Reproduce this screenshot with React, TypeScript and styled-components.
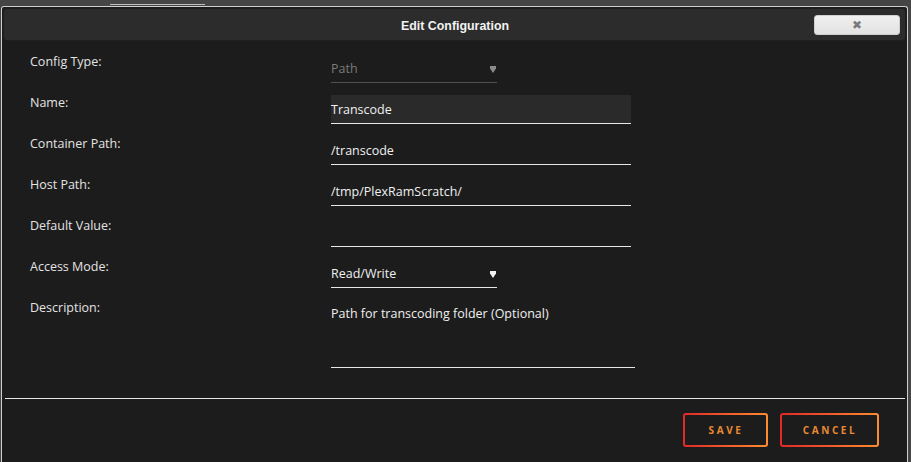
import React from 'react';
import styled, { createGlobalStyle } from 'styled-components';

const GlobalStyle = createGlobalStyle`
  html, body {
    margin: 0;
    padding: 0;
    background: #454545;
    height: 462px;
    overflow: hidden;
  }
  body {
    font-family: 'Open Sans', 'Liberation Sans', sans-serif;
  }
`;

type Field = {
  label: string;
  value: string;
  kind: 'select' | 'input' | 'textarea';
  disabled?: boolean;
  focused?: boolean;
};

const fields: Field[] = [
  { label: 'Config Type:', value: 'Path', kind: 'select', disabled: true },
  { label: 'Name:', value: 'Transcode', kind: 'input', focused: true },
  { label: 'Container Path:', value: '/transcode', kind: 'input' },
  { label: 'Host Path:', value: '/tmp/PlexRamScratch/', kind: 'input' },
  { label: 'Default Value:', value: '', kind: 'input' },
  { label: 'Access Mode:', value: 'Read/Write', kind: 'select' },
  { label: 'Description:', value: 'Path for transcoding folder (Optional)', kind: 'textarea' },
];

const Page = styled.div`
  width: 911px;
  height: 462px;
  display: flex;
  flex-direction: column;
`;

const TopStrip = styled.div`
  height: 6px;
  flex-shrink: 0;
  display: flex;
  align-items: flex-end;
  padding-bottom: 1px;
  box-sizing: border-box;
`;

const TabLine = styled.div`
  margin-left: 110px;
  width: 95px;
  height: 1px;
  background: #bdbdbd;
`;

const Dialog = styled.div`
  margin-left: 1px;
  width: 907px;
  flex: 1;
  box-sizing: border-box;
  border: 1px solid #cfcfcf;
  border-bottom: none;
  border-radius: 3px 3px 0 0;
  background: #1c1c1c;
  display: flex;
  flex-direction: column;
  padding: 1px 1px 0;
`;

const TitleBar = styled.div`
  height: 33px;
  box-sizing: border-box;
  background: #2c2c2c;
  border: 1px solid #1f1f1f;
  border-radius: 4px;
  display: flex;
  align-items: center;
  justify-content: center;
  position: relative;
`;

const Title = styled.span`
  color: #f2f2f2;
  font-family: 'Liberation Sans', Arial, sans-serif;
  font-weight: bold;
  font-size: 12.4px;
  margin: 2px 0 0 1px;
`;

const CloseButton = styled.button`
  position: absolute;
  right: 5px;
  top: 6px;
  width: 86px;
  height: 20px;
  border: 1px solid #d0d0d0;
  border-radius: 3px;
  background: linear-gradient(#f0f0f0, #e2e2e2);
  color: #7a7a7a;
  font-size: 12px;
  font-weight: bold;
  line-height: 18px;
  padding: 0;
  font-family: 'DejaVu Sans', sans-serif;
`;

const Form = styled.div`
  display: flex;
  flex-direction: column;
  gap: 12px;
  padding: 13px 0 0 27px;
`;

const Row = styled.div`
  display: grid;
  grid-template-columns: 301px 1fr;
  align-items: start;
`;

const Label = styled.div`
  color: #e3e3e3;
  font-size: 12.5px;
  line-height: 16px;
`;

const Control = styled.div<{ $width: number; $line: string; $bg?: string; $height?: number }>`
  width: ${(p) => p.$width}px;
  height: ${(p) => p.$height ?? 29}px;
  box-sizing: border-box;
  border-bottom: 1px solid ${(p) => p.$line};
  background: ${(p) => p.$bg ?? 'transparent'};
  display: flex;
  align-items: ${(p) => (p.$height ? 'flex-start' : 'center')};
  justify-content: space-between;
  padding-top: ${(p) => (p.$height ? 5 : 0)}px;
`;

const Value = styled.span<{ $muted?: boolean }>`
  color: ${(p) => (p.$muted ? '#7b7b7b' : '#f0f0f0')};
  font-size: 12.5px;
  line-height: 16px;
  padding-top: 1px;
`;

const Caret = styled.svg`
  width: 6px;
  height: 7px;
  margin-right: 1px;
  margin-top: 2px;
`;

const Divider = styled.div`
  height: 1px;
  background: #e6e6e6;
  margin: 30px 1px 0 2px;
`;

const Actions = styled.div`
  display: flex;
  justify-content: flex-end;
  gap: 12px;
  padding: 14px 27px 0 0;
`;

const ActionButton = styled.button<{ $width: number }>`
  width: ${(p) => p.$width}px;
  height: 34px;
  border: 2px solid transparent;
  border-radius: 3px;
  background: linear-gradient(#1c1c1c, #1c1c1c) padding-box,
    linear-gradient(90deg, #e22828, #ff8c2f) border-box;
  color: #e88a32;
  font-family: 'Open Sans', sans-serif;
  font-size: 10px;
  font-weight: bold;
  letter-spacing: 2.6px;
  padding: 0 0 0 1px;
`;

const CaretIcon = ({ color }: { color: string }) => (
  <Caret viewBox="0 0 6 7">
    <path d="M0 0H6V2.5L3 7L0 2.5Z" fill={color} />
  </Caret>
);

const FieldControl = ({ field }: { field: Field }) => {
  if (field.kind === 'select') {
    const line = field.disabled ? '#525252' : '#e6e6e6';
    return (
      <Control $width={166} $line={line}>
        <Value $muted={field.disabled}>{field.value}</Value>
        <CaretIcon color={field.disabled ? '#8a8a8a' : '#f2f2f2'} />
      </Control>
    );
  }
  if (field.kind === 'textarea') {
    return (
      <Control $width={304} $line="#e6e6e6" $height={68}>
        <Value>{field.value}</Value>
      </Control>
    );
  }
  return (
    <Control $width={300} $line="#e6e6e6" $bg={field.focused ? '#2a2a2a' : undefined}>
      <Value>{field.value}</Value>
    </Control>
  );
};

export default function App() {
  return (
    <Page>
      <GlobalStyle />
      <TopStrip>
        <TabLine />
      </TopStrip>
      <Dialog>
        <TitleBar>
          <Title>Edit Configuration</Title>
          <CloseButton>✖</CloseButton>
        </TitleBar>
        <Form>
          {fields.map((f) => (
            <Row key={f.label}>
              <Label>{f.label}</Label>
              <FieldControl field={f} />
            </Row>
          ))}
        </Form>
        <Divider />
        <Actions>
          <ActionButton $width={85}>SAVE</ActionButton>
          <ActionButton $width={99}>CANCEL</ActionButton>
        </Actions>
      </Dialog>
    </Page>
  );
}
